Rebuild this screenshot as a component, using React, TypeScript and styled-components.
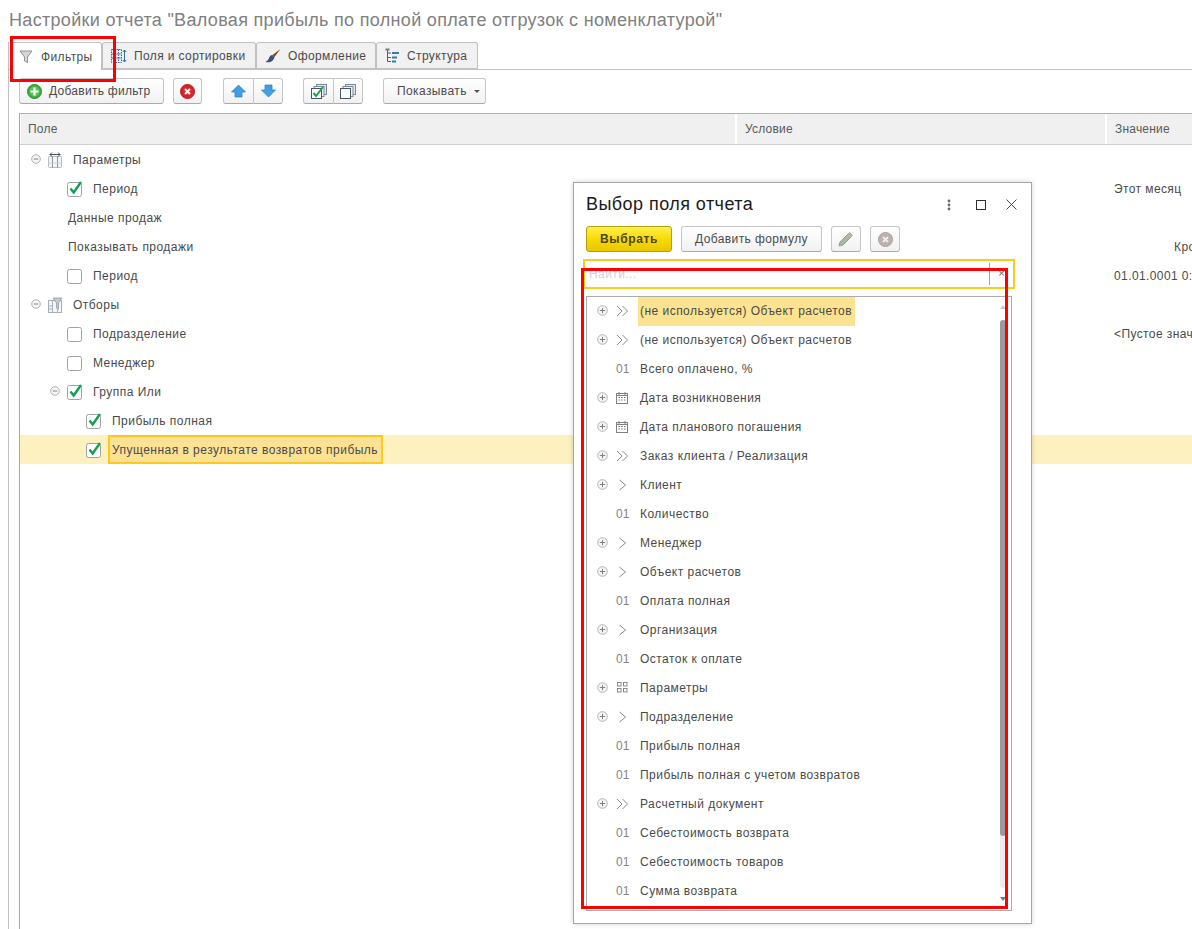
import React from "react";
import styled, { createGlobalStyle } from "styled-components";

const Global = createGlobalStyle`
  html, body { margin: 0; padding: 0; background: #fff; }
  body { font-family: "Liberation Sans", Arial, sans-serif; font-size: 12px; color: #4b4b4b; }
  * { box-sizing: border-box; }
`;

const Page = styled.div`
  position: relative;
  display: flex;
  flex-direction: column;
  width: 1192px;
  height: 929px;
  overflow: hidden;
  padding-left: 8px;
  background: #fff;
`;
const Title = styled.div`
  height: 42px;
  padding: 10px 0 0 1px;
  font-size: 18px;
  line-height: 20px;
  letter-spacing: 0.32px;
  color: #808080;
  white-space: nowrap;
`;
const Body = styled.div`
  display: flex;
  flex-direction: column;
  flex: 1;
  min-height: 0;
  border-left: 1px solid #c0c0c0;
`;
const TabBar = styled.div`
  display: flex;
  flex: none;
  height: 28px;
  padding-left: 1px;
  border-bottom: 1px solid #c4c4c4;
`;
const Tab = styled.div<{ $active?: boolean; $w: number }>`
  display: flex;
  align-items: center;
  width: ${(p) => p.$w}px;
  height: ${(p) => (p.$active ? 28 : 27)}px;
  padding-left: 8px;
  gap: ${(p) => (p.$active ? 8 : 7)}px;
  background: ${(p) => (p.$active ? "#fff" : "#f1f1f1")};
  border: 1px solid #c0c0c0;
  border-bottom: ${(p) => (p.$active ? "none" : "1px solid #c4c4c4")};
  border-radius: 3px 3px 0 0;
  color: #4b4b4b;
  white-space: nowrap;
  letter-spacing: 0.38px;
`;
const Toolbar = styled.div`
  display: flex;
  flex: none;
  align-items: flex-start;
  margin: 8px 0 0 10px;
  height: 26px;
`;
const Btn = styled.div<{ $w: number; $mr?: number; $pl?: number; $ls?: number }>`
  display: flex;
  align-items: center;
  justify-content: ${(p) => (p.$pl ? "flex-start" : "center")};
  padding-left: ${(p) => p.$pl ?? 0}px;
  gap: 7px;
  width: ${(p) => p.$w}px;
  height: 26px;
  margin-right: ${(p) => p.$mr ?? 0}px;
  background: linear-gradient(#ffffff, #f1f1f1);
  border: 1px solid #c6c6c6;
  border-bottom-color: #a9a9a9;
  border-radius: 3px;
  color: #4b4b4b;
  letter-spacing: ${(p) => p.$ls ?? 0.39}px;
  white-space: nowrap;
`;
const BtnGroup = styled.div<{ $mr?: number }>`
  display: flex;
  margin-right: ${(p) => p.$mr ?? 0}px;
  & > div { width: 30px; margin: 0; }
  & > div:first-child { border-radius: 3px 0 0 3px; border-right: none; }
  & > div:last-child { border-radius: 0 3px 3px 0; border-left: 1px solid #c6c6c6; }
`;
const Caret = styled.span`
  width: 0;
  height: 0;
  border-left: 3px solid transparent;
  border-right: 3px solid transparent;
  border-top: 3px solid #555;
`;
const Table = styled.div`
  flex: 1;
  margin: 9px 0 0 10px;
  border-left: 1px solid #a8a8a8;
  width: 1200px;
`;
const HeadRow = styled.div`
  display: grid;
  grid-template-columns: 716px 370px 1fr;
  height: 32px;
  background: #f0f0f0;
  border-top: 1px solid #b0b0b0;
  border-bottom: 1px solid #cfcfcf;
`;
const HeadCell = styled.div`
  display: flex;
  align-items: center;
  padding-left: 7px;
  border-right: 1px solid #fff;
  border-left: 1px solid #fff;
  color: #595959;
  letter-spacing: 0.2px;
  & + & { padding-left: 8px; }
`;
const Row = styled.div<{ $sel?: boolean }>`
  display: grid;
  grid-template-columns: 716px 370px 1fr;
  height: 29px;
  background: ${(p) => (p.$sel ? "#fdf1c0" : "transparent")};
`;
const FieldCell = styled.div<{ $pad: number }>`
  display: flex;
  align-items: center;
  padding-left: ${(p) => p.$pad}px;
  white-space: nowrap;
  letter-spacing: 0.47px;
  color: #4a4a4a;
`;
const Empty = styled.div``;
const ValueCell = styled.div<{ $pad?: number }>`
  display: flex;
  align-items: center;
  padding-left: ${(p) => p.$pad ?? 8}px;
  white-space: nowrap;
  overflow: hidden;
  letter-spacing: 0.4px;
  color: #4a4a4a;
`;
const Toggle = styled.svg<{ $mr: number }>`
  width: 10px;
  height: 10px;
  flex: none;
  margin-right: ${(p) => p.$mr}px;
  margin-bottom: 2px;
`;
const TypeIcon = styled.svg`
  width: 16px;
  height: 16px;
  flex: none;
  margin-right: 10px;
`;
const CheckBox = styled.svg`
  width: 16px;
  height: 17px;
  flex: none;
  margin-right: 10px;
`;
const FocusCell = styled.span`
  display: flex;
  align-items: center;
  height: 29px;
  margin-left: -4px;
  padding: 0 3px 0 2px;
  background: #fde293;
  border: 2px solid #fbc91f;
`;

/* dialog */
const Dialog = styled.div`
  position: absolute;
  left: 573px;
  top: 182px;
  width: 459px;
  height: 742px;
  background: #fff;
  border: 1px solid #a6a6a6;
  box-shadow: 0 0 5px rgba(0, 0, 0, 0.18);
  padding: 0 12px;
`;
const DialogHead = styled.div`
  display: flex;
  align-items: center;
  height: 43px;
`;
const DialogTitle = styled.div`
  flex: 1;
  font-size: 18px;
  letter-spacing: 0.45px;
  color: #1a1a1a;
  white-space: nowrap;
`;
const WindowIcons = styled.div`
  display: flex;
  align-items: center;
  gap: 17px;
  margin-right: 2px;
`;
const DialogBar = styled.div`
  display: flex;
  height: 26px;
`;
const PrimaryBtn = styled.div`
  display: flex;
  align-items: center;
  justify-content: center;
  width: 86px;
  height: 26px;
  margin-right: 9px;
  background: linear-gradient(#fff04a, #f6d800 55%, #e9c700);
  border: 1px solid #b89f10;
  border-radius: 3px;
  font-weight: bold;
  color: #4c4520;
  letter-spacing: 0.6px;
`;
const Search = styled.div`
  display: flex;
  align-items: center;
  width: 432px;
  height: 30px;
  margin: 7px 0 0 -3px;
  border: 2px solid #fbc91f;
`;
const SearchHint = styled.div`
  flex: 1;
  padding-left: 4px;
  color: #d8cde0;
  letter-spacing: 0.4px;
`;
const SearchClear = styled.div`
  width: 24px;
  height: 22px;
  border-left: 1px solid #a0a0a0;
  text-align: center;
  line-height: 20px;
  font-size: 11px;
  color: #666;
`;
const List = styled.div`
  position: relative;
  width: 426px;
  height: 615px;
  margin-top: 7px;
  border: 1px solid #ababab;
  overflow: hidden;
`;
const ListRow = styled.div`
  display: flex;
  align-items: center;
  height: 29px;
  padding-left: 10px;
`;
const ListToggleSlot = styled.div`
  width: 10px;
  height: 10px;
  flex: none;
  margin: 0 9px 4px 0;
`;
const ListIconSlot = styled.div`
  display: flex;
  align-items: center;
  width: 16px;
  height: 16px;
  flex: none;
  margin: 0 6px 2px 0;
  color: #858585;
`;
const ListText = styled.div<{ $sel?: boolean }>`
  display: flex;
  align-items: center;
  height: 29px;
  padding: 0 3px 1px 2px;
  background: ${(p) => (p.$sel ? "#fde38f" : "transparent")};
  color: #4a4a4a;
  letter-spacing: 0.47px;
  white-space: nowrap;
`;
const ScrollTrack = styled.div`
  position: absolute;
  left: 413px;
  top: 23px;
  width: 6px;
  height: 568px;
  border-radius: 3px;
  background: #ececec;
`;
const ScrollThumb = styled.div`
  width: 100%;
  height: 516px;
  border-radius: 3px;
  background: #9b9b9b;
`;
const ScrollArrow = styled.div<{ $down?: boolean }>`
  position: absolute;
  left: 413px;
  top: ${(p) => (p.$down ? 600 : 8)}px;
  width: 0;
  height: 0;
  border-left: 3px solid transparent;
  border-right: 3px solid transparent;
  ${(p) =>
    p.$down ? "border-top: 4px solid #777;" : "border-bottom: 4px solid #ccc;"}
`;
const RedFrame = styled.div<{ $x: number; $y: number; $w: number; $h: number }>`
  position: absolute;
  left: ${(p) => p.$x}px;
  top: ${(p) => p.$y}px;
  width: ${(p) => p.$w}px;
  height: ${(p) => p.$h}px;
  border: 3px solid #ff0000;
  pointer-events: none;
`;

/* ---------- icons ---------- */
const Minus = ({ mr }: { mr: number }) => (
  <Toggle $mr={mr} viewBox="0 0 10 10">
    <circle cx="5" cy="5" r="4.3" fill="#f6f6f6" stroke="#b0b0b0" />
    <path d="M2.8 5h4.4" stroke="#808080" />
  </Toggle>
);
const Plus = () => (
  <svg width="11" height="11" viewBox="0 0 11 11">
    <circle cx="5.5" cy="5.5" r="4.8" fill="#f6f6f6" stroke="#b4b4b4" />
    <path d="M2.8 5.5h5.4M5.5 2.8v5.4" stroke="#808080" />
  </svg>
);
const Check = ({ on }: { on: boolean }) => (
  <CheckBox viewBox="0 0 16 17">
    <rect x="0.5" y="2.5" width="14" height="14" rx="2" fill="#fff" stroke="#a2a2a2" />
    {on && <path d="M3.5 8.5l3.2 4L14 2" fill="none" stroke="#10a050" strokeWidth="2.4" />}
  </CheckBox>
);
const ParamsIcon = () => (
  <TypeIcon viewBox="0 0 16 16">
    <rect x="1.5" y="4.5" width="13" height="11" rx="1" fill="#f3f5f7" stroke="#b4bac0" />
    <path d="M5.5 4.5v11M10.5 4.5v11" stroke="#8e979f" />
    <path d="M1.5 11h13" stroke="#c9ced2" />
    <path d="M3 2.5h10M3 2.5l2-2M3 2.5l2 2M13 2.5l-2-2M13 2.5l-2 2" fill="none" stroke="#44505a" />
  </TypeIcon>
);
const FilterGroupIcon = () => (
  <TypeIcon viewBox="0 0 16 16">
    <rect x="1.5" y="3.5" width="13" height="12" fill="#f3f5f7" stroke="#a6adb3" />
    <path d="M5.5 3.5v12M10.5 6v9.5M1.5 9h4M1.5 12h4" stroke="#a9b2ba" />
    <path d="M6 1h9l-3.5 5v6l-2-1V6z" fill="#c4c9cd" stroke="#8b949b" strokeWidth="0.7" />
  </TypeIcon>
);
const Funnel = () => (
  <svg width="14" height="15" viewBox="0 0 14 15" style={{ flex: "none" }}>
    <path d="M1 2h12L8.5 8v5.5l-3-1.5V8z" fill="#d6d6d6" stroke="#929292" />
  </svg>
);
const FieldsIcon = () => (
  <svg width="16" height="16" viewBox="0 0 16 16" style={{ flex: "none" }}>
    <rect x="0.5" y="1.5" width="10" height="13" fill="#e8eef6" stroke="#47628c" strokeDasharray="1.5 1" />
    <path d="M4 1.5v13M7.5 1.5v13M0.5 6h10M0.5 10h10" stroke="#47628c" strokeDasharray="1.5 1" />
    <path d="M13.5 2v12M11.8 4l1.7-2 1.7 2M11.8 12l1.7 2 1.7-2" fill="none" stroke="#2f6f9f" />
  </svg>
);
const BrushIcon = () => (
  <svg width="16" height="16" viewBox="0 0 16 16" style={{ flex: "none" }}>
    <path d="M15.5 1L7.5 7l2 2z" fill="#7d4a1d" />
    <path d="M7.5 7c-2.2 0-3 1.6-3.4 3-.4 1.4-1.6 2.6-3.6 4 3.4.8 7.6.2 9-5z" fill="#3d4f80" />
  </svg>
);
const StructureIcon = () => (
  <svg width="15" height="16" viewBox="0 0 15 16" style={{ flex: "none" }}>
    <path d="M2.5 1v12.5H6M2.5 5H6M2.5 9.5H6" fill="none" stroke="#5c5c5c" />
    <rect x="0.5" y="0.5" width="4" height="2" fill="#7a7a7a" />
    <path d="M7 5h7M7 9.5h5M7 13.5h4" stroke="#2f7fa8" strokeWidth="2" />
  </svg>
);
const AddIcon = () => (
  <svg width="15" height="15" viewBox="0 0 15 15" style={{ flex: "none" }}>
    <circle cx="7.5" cy="7.5" r="7" fill="#3cae3c" stroke="#2b8d2f" />
    <circle cx="7.5" cy="7.5" r="5" fill="#58c453" />
    <path d="M3.5 7.5h8M7.5 3.5v8" stroke="#fff" strokeWidth="2.2" />
  </svg>
);
const DelIcon = ({ muted }: { muted?: boolean }) => (
  <svg width="15" height="15" viewBox="0 0 15 15">
    <circle cx="7.5" cy="7.5" r="7" fill={muted ? "#bdb0b0" : "#d6242b"} stroke={muted ? "#aca0a0" : "#b81c22"} />
    <path d="M5 5l5 5M10 5l-5 5" stroke={muted ? "#f0eaea" : "#fff"} strokeWidth="2" />
  </svg>
);
const UpIcon = () => (
  <svg width="15" height="14" viewBox="0 0 15 14">
    <path d="M7.5 1L14.5 8H11v5H4V8H.5z" fill="#3f9fe4" stroke="#2b7cb8" strokeWidth="0.7" />
  </svg>
);
const DownIcon = () => (
  <svg width="15" height="14" viewBox="0 0 15 14">
    <path d="M7.5 13L14.5 6H11V1H4v5H.5z" fill="#3f9fe4" stroke="#2b7cb8" strokeWidth="0.7" />
  </svg>
);
const CheckAllIcon = () => (
  <svg width="16" height="15" viewBox="0 0 16 15">
    <rect x="5.5" y="0.5" width="10" height="10" fill="#dfe7ee" stroke="#7a8a98" />
    <rect x="3" y="2.5" width="10" height="10" fill="#eef2f5" stroke="#7a8a98" />
    <rect x="0.5" y="4.5" width="10" height="10" fill="#fff" stroke="#44586a" />
    <path d="M2.5 9l2.5 3 7-9" fill="none" stroke="#17a24d" strokeWidth="2" />
  </svg>
);
const UncheckAllIcon = () => (
  <svg width="16" height="15" viewBox="0 0 16 15">
    <rect x="5.5" y="0.5" width="10" height="10" fill="#dfe7ee" stroke="#7a8a98" />
    <rect x="3" y="2.5" width="10" height="10" fill="#eef2f5" stroke="#7a8a98" />
    <rect x="0.5" y="4.5" width="10" height="10" fill="#fff" stroke="#44586a" />
  </svg>
);
const PencilIcon = () => (
  <svg width="16" height="16" viewBox="0 0 16 16">
    <path d="M11.5 1.5l3 3L5 14l-4 1 1-4z" fill="#a9b9a2" stroke="#94a08e" />
    <path d="M11.5 1.5l3 3-1.4 1.4-3-3z" fill="#c2b6a8" />
  </svg>
);
const Dots = () => (
  <svg width="4" height="12" viewBox="0 0 4 12">
    <circle cx="2" cy="2" r="1.4" fill="#6a6a6a" />
    <circle cx="2" cy="6" r="1.4" fill="#6a6a6a" />
    <circle cx="2" cy="10" r="1.4" fill="#6a6a6a" />
  </svg>
);
const MaxIcon = () => (
  <svg width="10" height="10" viewBox="0 0 10 10" style={{ margin: "0 3px 0 8px" }}>
    <rect x="0.5" y="0.5" width="9" height="9" fill="none" stroke="#2f2f2f" />
  </svg>
);
const CloseIcon = () => (
  <svg width="11" height="11" viewBox="0 0 11 11">
    <path d="M.5.5l10 10M10.5.5l-10 10" stroke="#4a4a4a" />
  </svg>
);
const Chevron = ({ double }: { double?: boolean }) => (
  <svg width="14" height="12" viewBox="0 0 14 12">
    {double ? (
      <path d="M1 1l5 5-5 5M6.5 1l5 5-5 5" fill="none" stroke="#8a8a8a" />
    ) : (
      <path d="M3.5 1l6 5-6 5" fill="none" stroke="#8a8a8a" />
    )}
  </svg>
);
const CalendarIcon = () => (
  <svg width="12" height="12" viewBox="0 0 12 12">
    <rect x="0.5" y="1.5" width="11" height="10" fill="none" stroke="#808080" />
    <path d="M3 0v3M9 0v3M.5 3.5h11" stroke="#808080" />
    <path d="M2.5 5.5h1.5M5.2 5.5h1.5M8 5.5h1.5M2.5 8h1.5M5.2 8h1.5M8 8h1.5" stroke="#707070" />
  </svg>
);
const GridIcon = () => (
  <svg width="11" height="11" viewBox="0 0 11 11" style={{ marginLeft: 1 }}>
    <rect x="0.5" y="0.5" width="3.5" height="3.5" fill="none" stroke="#8a8a8a" />
    <rect x="6.5" y="0.5" width="3.5" height="3.5" fill="none" stroke="#8a8a8a" />
    <rect x="0.5" y="6.5" width="3.5" height="3.5" fill="none" stroke="#8a8a8a" />
    <rect x="6.5" y="6.5" width="3.5" height="3.5" fill="none" stroke="#8a8a8a" />
  </svg>
);

/* ---------- data ---------- */
type Kind = "two" | "one" | "num" | "cal" | "grid";
const fields: { kind: Kind; text: string; plus: boolean; sel?: boolean }[] = [
  { kind: "two", text: "(не используется) Объект расчетов", plus: true, sel: true },
  { kind: "two", text: "(не используется) Объект расчетов", plus: true },
  { kind: "num", text: "Всего оплачено, %", plus: false },
  { kind: "cal", text: "Дата возникновения", plus: true },
  { kind: "cal", text: "Дата планового погашения", plus: true },
  { kind: "two", text: "Заказ клиента / Реализация", plus: true },
  { kind: "one", text: "Клиент", plus: true },
  { kind: "num", text: "Количество", plus: false },
  { kind: "one", text: "Менеджер", plus: true },
  { kind: "one", text: "Объект расчетов", plus: true },
  { kind: "num", text: "Оплата полная", plus: false },
  { kind: "one", text: "Организация", plus: true },
  { kind: "num", text: "Остаток к оплате", plus: false },
  { kind: "grid", text: "Параметры", plus: true },
  { kind: "one", text: "Подразделение", plus: true },
  { kind: "num", text: "Прибыль полная", plus: false },
  { kind: "num", text: "Прибыль полная с учетом возвратов", plus: false },
  { kind: "two", text: "Расчетный документ", plus: true },
  { kind: "num", text: "Себестоимость возврата", plus: false },
  { kind: "num", text: "Себестоимость товаров", plus: false },
  { kind: "num", text: "Сумма возврата", plus: false },
];

const KindIcon = ({ kind }: { kind: Kind }) => {
  if (kind === "two") return <Chevron double />;
  if (kind === "one") return <Chevron />;
  if (kind === "cal") return <CalendarIcon />;
  if (kind === "grid") return <GridIcon />;
  return <span>01</span>;
};

export default function App() {
  return (
    <Page>
      <Global />
      <Title>Настройки отчета "Валовая прибыль по полной оплате отгрузок с номенклатурой"</Title>
      <Body>
        <TabBar>
          <Tab $active $w={92}><Funnel />Фильтры</Tab>
          <Tab $w={154}><FieldsIcon />Поля и сортировки</Tab>
          <Tab $w={120}><BrushIcon />Оформление</Tab>
          <Tab $w={102}><StructureIcon />Структура</Tab>
        </TabBar>
        <Toolbar>
          <Btn $w={145} $mr={9} $pl={7} $ls={0.27}><AddIcon />Добавить фильтр</Btn>
          <Btn $w={29} $mr={21}><DelIcon /></Btn>
          <BtnGroup $mr={20}>
            <Btn $w={30}><UpIcon /></Btn>
            <Btn $w={30}><DownIcon /></Btn>
          </BtnGroup>
          <BtnGroup $mr={20}>
            <Btn $w={30}><CheckAllIcon /></Btn>
            <Btn $w={30}><UncheckAllIcon /></Btn>
          </BtnGroup>
          <Btn $w={103} $pl={13}>Показывать<Caret /></Btn>
        </Toolbar>
        <Table>
          <HeadRow>
            <HeadCell>Поле</HeadCell>
            <HeadCell>Условие</HeadCell>
            <HeadCell>Значение</HeadCell>
          </HeadRow>
          <Row>
            <FieldCell $pad={11}><Minus mr={6} /><ParamsIcon />Параметры</FieldCell>
            <Empty /><Empty />
          </Row>
          <Row>
            <FieldCell $pad={47}><Check on />Период</FieldCell>
            <Empty /><ValueCell>Этот месяц</ValueCell>
          </Row>
          <Row>
            <FieldCell $pad={48}>Данные продаж</FieldCell>
            <Empty /><Empty />
          </Row>
          <Row>
            <FieldCell $pad={48}>Показывать продажи</FieldCell>
            <Empty /><ValueCell $pad={68}>Кроме</ValueCell>
          </Row>
          <Row>
            <FieldCell $pad={47}><Check on={false} />Период</FieldCell>
            <Empty /><ValueCell>01.01.0001 0:00:00</ValueCell>
          </Row>
          <Row>
            <FieldCell $pad={11}><Minus mr={6} /><FilterGroupIcon />Отборы</FieldCell>
            <Empty /><Empty />
          </Row>
          <Row>
            <FieldCell $pad={47}><Check on={false} />Подразделение</FieldCell>
            <Empty /><ValueCell>&lt;Пустое значение&gt;</ValueCell>
          </Row>
          <Row>
            <FieldCell $pad={47}><Check on={false} />Менеджер</FieldCell>
            <Empty /><Empty />
          </Row>
          <Row>
            <FieldCell $pad={30}><Minus mr={7} /><Check on />Группа Или</FieldCell>
            <Empty /><Empty />
          </Row>
          <Row>
            <FieldCell $pad={66}><Check on />Прибыль полная</FieldCell>
            <Empty /><Empty />
          </Row>
          <Row $sel>
            <FieldCell $pad={66}><Check on /><FocusCell>Упущенная в результате возвратов прибыль</FocusCell></FieldCell>
            <Empty /><Empty />
          </Row>
        </Table>
      </Body>

      <Dialog>
        <DialogHead>
          <DialogTitle>Выбор поля отчета</DialogTitle>
          <WindowIcons><Dots /><MaxIcon /><CloseIcon /></WindowIcons>
        </DialogHead>
        <DialogBar>
          <PrimaryBtn>Выбрать</PrimaryBtn>
          <Btn $w={141} $mr={9}>Добавить формулу</Btn>
          <Btn $w={30} $mr={9}><PencilIcon /></Btn>
          <Btn $w={30}><DelIcon muted /></Btn>
        </DialogBar>
        <Search>
          <SearchHint>Найти...</SearchHint>
          <SearchClear>×</SearchClear>
        </Search>
        <List>
          {fields.map((f, i) => (
            <ListRow key={i}>
              <ListToggleSlot>{f.plus && <Plus />}</ListToggleSlot>
              <ListIconSlot><KindIcon kind={f.kind} /></ListIconSlot>
              <ListText $sel={f.sel}>{f.text}</ListText>
            </ListRow>
          ))}
          <ScrollArrow />
          <ScrollTrack><ScrollThumb /></ScrollTrack>
          <ScrollArrow $down />
        </List>
      </Dialog>

      <RedFrame $x={10} $y={36} $w={106} $h={46} />
      <RedFrame $x={581} $y={268} $w={427} $h={641} />
    </Page>
  );
}
